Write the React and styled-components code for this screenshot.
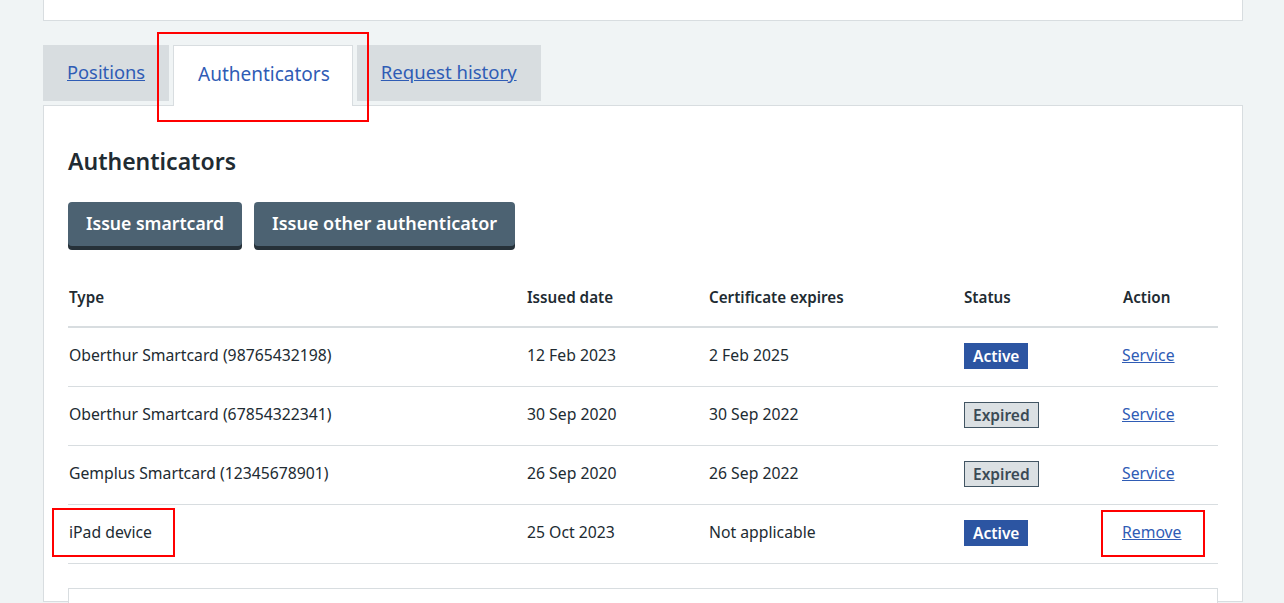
import React from 'react';
import styled, { createGlobalStyle } from 'styled-components';

const GlobalStyle = createGlobalStyle`
  html, body {
    margin: 0;
    height: 603px;
    overflow: hidden;
    background: #f0f4f5;
    color: #212b32;
    font-family: "Noto Sans", "Open Sans", sans-serif;
  }
`;

const Page = styled.div`
  position: relative;
  width: 1200px;
  margin-left: 43px;
`;

const TopCard = styled.div`
  height: 20px;
  background: #fff;
  border: 1px solid #d8dde0;
  border-top: none;
`;

const TabList = styled.ul`
  display: flex;
  align-items: flex-start;
  gap: 4px;
  height: 60px;
  margin: 24px 0 0;
  padding: 0;
  list-style: none;
`;

const Tab = styled.li`
  height: 56px;
  padding: 0 24px;
  background: #d8dde0;
  font-size: ${props => props.$size}px;
  line-height: 54px;
`;

const ActiveTab = styled.li`
  position: relative;
  z-index: 1;
  height: 60px;
  padding: 0 22px 0 24px;
  background: #fff;
  border: 1px solid #d8dde0;
  border-bottom: none;
  color: #2f5cb5;
  font-size: 19px;
  line-height: 57px;
`;

const TabLink = styled.a`
  color: #2f5cb5;
  text-decoration: underline;
`;

const Panel = styled.section`
  height: 497px;
  padding: 39px 24px 0;
  background: #fff;
  border: 1px solid #d8dde0;
  box-sizing: border-box;
`;

const Heading = styled.h2`
  margin: 0 0 25px;
  font-size: 23px;
  font-weight: 600;
  line-height: 32px;
`;

const Actions = styled.div`
  display: flex;
  gap: 12px;
`;

const Button = styled.button`
  height: 44px;
  padding: 0 18px 2px;
  border: none;
  border-radius: 4px;
  background: #4c6272;
  box-shadow: 0 4px 0 #263139;
  color: #fff;
  font-family: inherit;
  font-size: ${props => props.$size}px;
  font-weight: 600;
`;

const Table = styled.table`
  width: 1150px;
  margin-top: 5px;
  border-collapse: collapse;
  table-layout: fixed;
  font-size: 15.75px;
`;

const Th = styled.th`
  height: 76px;
  padding: 0 0 19px 1px;
  border-bottom: 2px solid #d8dde0;
  box-sizing: border-box;
  font-size: 15.2px;
  font-weight: 600;
  text-align: left;
  vertical-align: bottom;
  width: ${props => props.$width}px;
`;

const Td = styled.td`
  height: 59px;
  padding: 0 0 4px 1px;
  border-bottom: 1px solid #d8dde0;
  box-sizing: border-box;
`;

const StatusTd = styled(Td)`
  padding-bottom: 2px;
`;

const Badge = styled.strong`
  display: inline-block;
  padding: 0 8px;
  border: 1px solid ${props => (props.$expired ? '#425563' : '#2c55a2')};
  background: ${props => (props.$expired ? '#dbe0e3' : '#2c55a2')};
  color: ${props => (props.$expired ? '#3b4a55' : '#fff')};
  font-size: 15.5px;
  font-weight: 600;
  line-height: 24px;
`;

const ActionLink = styled.a`
  margin-left: -1px;
  color: #2f5cb5;
  text-decoration: underline;
`;

const InnerCard = styled.div`
  height: 60px;
  margin-top: 24px;
  background: #fff;
  border: 1px solid #d8dde0;
`;

// red annotation frames drawn over the screenshot
const Marker = styled.div`
  position: absolute;
  z-index: 2;
  left: ${props => props.$x}px;
  top: ${props => props.$y}px;
  width: ${props => props.$w}px;
  height: ${props => props.$h}px;
  border: 2px solid #f00;
  box-sizing: border-box;
  pointer-events: none;
`;

const rows = [
  { type: 'Oberthur Smartcard (98765432198)', issued: '12 Feb 2023', expires: '2 Feb 2025', status: 'Active', action: 'Service' },
  { type: 'Oberthur Smartcard (67854322341)', issued: '30 Sep 2020', expires: '30 Sep 2022', status: 'Expired', action: 'Service' },
  { type: 'Gemplus Smartcard (12345678901)', issued: '26 Sep 2020', expires: '26 Sep 2022', status: 'Expired', action: 'Service' },
  { type: 'iPad device', issued: '25 Oct 2023', expires: 'Not applicable', status: 'Active', action: 'Remove' },
];

const App = () => (
  <>
    <GlobalStyle />
    <Page>
      <TopCard />
      <TabList>
        <Tab $size={18.3}><TabLink href="#positions">Positions</TabLink></Tab>
        <ActiveTab>Authenticators</ActiveTab>
        <Tab $size={18.55}><TabLink href="#history">Request history</TabLink></Tab>
      </TabList>
      <Panel>
        <Heading>Authenticators</Heading>
        <Actions>
          <Button $size={17.6}>Issue smartcard</Button>
          <Button $size={18}>Issue other authenticator</Button>
        </Actions>
        <Table>
          <thead>
            <tr>
              <Th $width={458}>Type</Th>
              <Th $width={182}>Issued date</Th>
              <Th $width={255}>Certificate expires</Th>
              <Th $width={159}>Status</Th>
              <Th $width={96}>Action</Th>
            </tr>
          </thead>
          <tbody>
            {rows.map(row => (
              <tr key={row.type}>
                <Td>{row.type}</Td>
                <Td>{row.issued}</Td>
                <Td>{row.expires}</Td>
                <StatusTd><Badge $expired={row.status === 'Expired'}>{row.status}</Badge></StatusTd>
                <Td><ActionLink href="#action">{row.action}</ActionLink></Td>
              </tr>
            ))}
          </tbody>
        </Table>
        <InnerCard />
      </Panel>
      <Marker $x={114} $y={32} $w={212} $h={90} />
      <Marker $x={9} $y={508} $w={123} $h={49} />
      <Marker $x={1058} $y={510} $w={104} $h={47} />
    </Page>
  </>
);

export default App;
